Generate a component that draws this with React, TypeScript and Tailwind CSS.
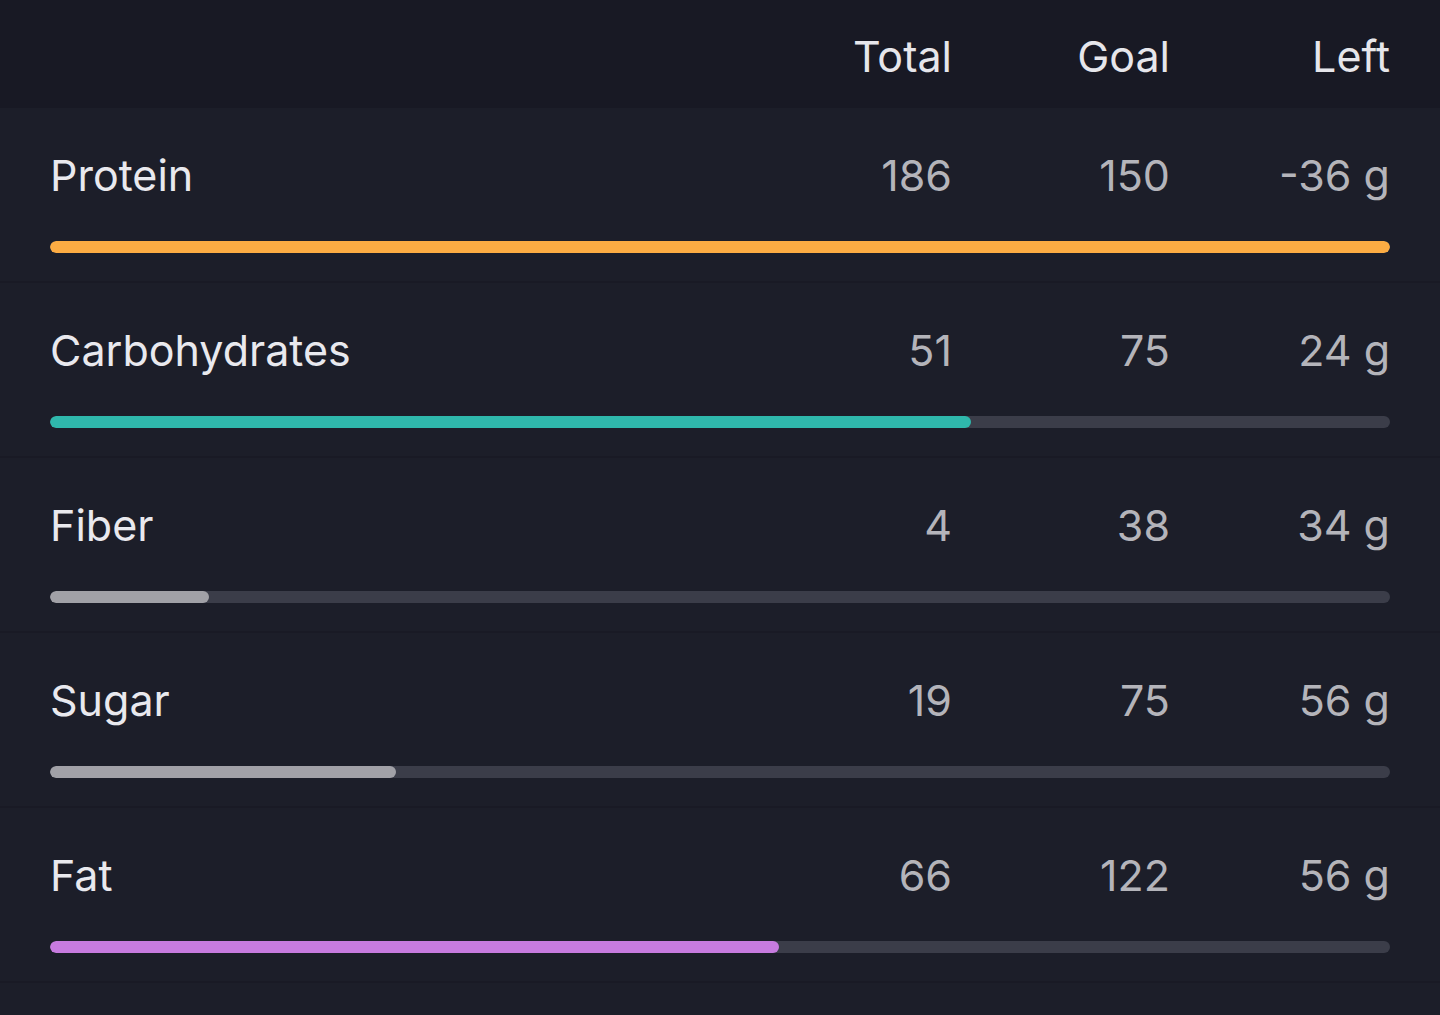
import React from "react";

const ROWS = [
  { name: "Protein", total: "186", goal: "150", left: "-36 g", pct: 100, color: "bg-[#fcac43]" },
  { name: "Carbohydrates", total: "51", goal: "75", left: "24 g", pct: 68.7, color: "bg-[#2fb8ac]" },
  { name: "Fiber", total: "4", goal: "38", left: "34 g", pct: 11.9, color: "bg-[#a1a1a7]" },
  { name: "Sugar", total: "19", goal: "75", left: "56 g", pct: 25.8, color: "bg-[#a1a1a7]" },
  { name: "Fat", total: "66", goal: "122", left: "56 g", pct: 54.4, color: "bg-[#c77bdf]" },
];

export default function App() {
  return (
    <div
      className="min-h-[1015px] w-[1440px] bg-[#1c1e29] flex flex-col"
      style={{ fontFamily: "Inter, 'Noto Sans', sans-serif" }}
    >
      {/* Column headers */}
      <div className="h-[108px] bg-[#181924] flex items-center pt-[4px] px-[50px]">
        <div className="flex-1" />
        <div className="w-[220px] text-right text-[43px] text-[#e6e6eb] leading-none">Total</div>
        <div className="w-[218px] text-right text-[43px] text-[#e6e6eb] leading-none">Goal</div>
        <div className="w-[220px] text-right text-[43px] text-[#e6e6eb] leading-none">Left</div>
      </div>

      {ROWS.map((row) => (
        <div key={row.name} className="h-[175px] border-b-2 border-[#191a25] px-[50px] pt-[46px] flex flex-col">
          <div className="flex items-center h-[42px] text-[43px] leading-none">
            <div className="flex-1 text-[#e9e9ee]">{row.name}</div>
            <div className="w-[220px] text-right text-[#b4b4ba]">{row.total}</div>
            <div className="w-[218px] text-right text-[#b4b4ba]">{row.goal}</div>
            <div className="w-[220px] text-right text-[#b4b4ba]">{row.left}</div>
          </div>
          <div className="mt-[45px] h-[12px] rounded-full bg-[#3b3d49] overflow-hidden">
            <div className={`h-full rounded-full ${row.color}`} style={{ width: `${row.pct}%` }} />
          </div>
        </div>
      ))}
    </div>
  );
}
